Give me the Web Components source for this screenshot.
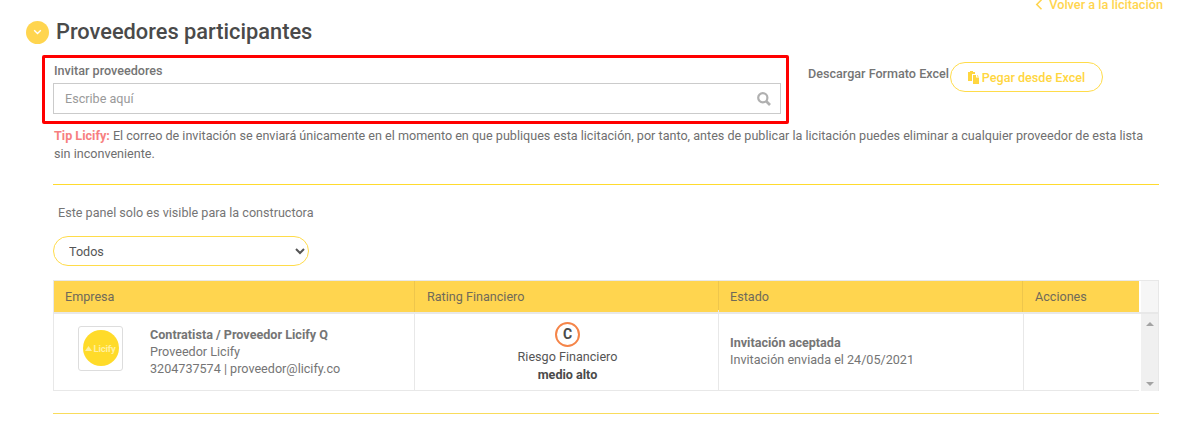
<!DOCTYPE html>
<html lang="es">
<head>
<meta charset="utf-8">
<title>Proveedores participantes</title>
<style>
    body {
        margin: 0;
        background: #fff;
        font-family: Roboto, "Liberation Sans", sans-serif;
        color: #6f6f6f;
        overflow: hidden;
    }
</style>
</head>
<body>
<provider-page></provider-page>

<script>
const YELLOW = '#ffd54f';

class SectionTitle extends HTMLElement {
    constructor() {
        super();
        this.attachShadow({ mode: 'open' });
        this.shadowRoot.innerHTML = `
            <style>
                :host { display: flex; align-items: center; gap: 7px; padding-left: 26px; height: 24px; }
                .dot { width: 23px; height: 23px; border-radius: 50%; background: ${YELLOW}; display: flex; align-items: center; justify-content: center; }
                h1 { margin: 0; font-size: 21.8px; line-height: 24px; font-weight: 500; color: #4a4a4a; }
            </style>
            <span class="dot">
                <svg width="9" height="6" viewBox="0 0 9 6"><path d="M1.2 1.2 4.5 4.4 7.8 1.2" fill="none" stroke="#fff" stroke-width="1.4"/></svg>
            </span>
            <h1><slot></slot></h1>
        `;
    }
}

class InviteBox extends HTMLElement {
    constructor() {
        super();
        this.attachShadow({ mode: 'open' });
        this.shadowRoot.innerHTML = `
            <style>
                :host { display: block; box-sizing: border-box; width: 747px; height: 69px; border: 3px solid #f00; border-radius: 2px; padding: 6px 5px 0 8px; }
                label { display: block; font-size: 12.6px; line-height: 14px; font-weight: 500; color: #757575; margin: 0 0 5px 1px; }
                .field { display: flex; align-items: center; box-sizing: border-box; height: 31px; border: 1px solid #cbcbcb; padding: 0 9px 0 11px; }
                input { flex: 1; border: 0; outline: 0; padding: 0; font: 400 12.6px Roboto, sans-serif; color: #6f6f6f; }
                input::placeholder { color: #9a9a9a; opacity: 1; }
            </style>
            <label>Invitar proveedores</label>
            <div class="field">
                <input placeholder="Escribe aquí">
                <svg width="14" height="14" viewBox="0 0 14 14"><circle cx="5.8" cy="5.8" r="4.6" fill="none" stroke="#b0b0b0" stroke-width="2.2"/><path d="M9 9 13 13" stroke="#b0b0b0" stroke-width="2.6"/></svg>
            </div>
        `;
    }
}

class PasteButton extends HTMLElement {
    constructor() {
        super();
        this.attachShadow({ mode: 'open' });
        this.shadowRoot.innerHTML = `
            <style>
                :host { display: inline-flex; align-items: center; justify-content: center; gap: 3px; box-sizing: border-box; width: 153px; height: 30px; margin-left: 1px; border: 1px solid #ffdc4a; border-radius: 15px; color: #ffd640; font-size: 12.6px; font-weight: 500; }
            </style>
            <svg width="11" height="13" viewBox="0 0 11 13"><path d="M0 1H2V0H5V1H7V3H4V10H0Z" fill="#ffd640"/><path d="M5 4H8V6.5H11V13H5Z" fill="#ffd640"/><path d="M9 4 11 5.6H9Z" fill="#ffd640"/></svg>
            <slot></slot>
        `;
    }
}

class ProviderTable extends HTMLElement {
    constructor() {
        super();
        this.attachShadow({ mode: 'open' });
        this.shadowRoot.innerHTML = `
            <style>
                :host { display: block; box-sizing: border-box; width: 1106px; height: 111px; border: 1px solid #e8e8e8; font-size: 12.6px; color: #757575; }
                .head { display: grid; grid-template-columns: 360px 304px 304px 117px 19px; height: 31px; border-bottom: 2px solid #e8e8e8; }
                .row { display: grid; grid-template-columns: 360px 304px 305px 116px 19px; height: 77px; }
                .head div { background: ${YELLOW}; color: #6f6a5a; padding-left: 12px; line-height: 31px; border-left: 1px solid #eec64c; }
                .head div:first-child { border-left: 0; padding-left: 11px; }
                .head div:nth-child(3) { padding-left: 11px; }
                .head .gap { background: #f6f6f6; border-left: 2px solid #fff; padding: 0; }
                .row > div { border-left: 1px solid #e8e8e8; }
                .row > div:first-child { border-left: 0; }
                .company { display: flex; align-items: center; padding-left: 24px; gap: 27px; line-height: 17px; }
                .company > div:last-child { margin-top: -3px; }
                .logo { box-sizing: border-box; width: 45px; height: 45px; border: 1px solid #ddd; border-radius: 3px; display: flex; align-items: center; justify-content: center; margin-top: -9px; }
                .logo span { width: 36px; height: 36px; border-radius: 50%; background: #ffdb2a; color: #fff0a0; font-size: 9.5px; font-weight: 700; letter-spacing: -.2px; display: flex; align-items: center; justify-content: center; gap: 1px; }
                b { font-weight: 700; }
                .rating { display: flex; flex-direction: column; align-items: center; padding: 8px 0 0 2px; color: #555; line-height: 18px; }
                .rating i { box-sizing: border-box; width: 25px; height: 25px; border: 2px solid #f58549; border-radius: 50%; font: 700 14px/21px Roboto, sans-serif; text-align: center; color: #4a4a4a; margin-bottom: 1px; }
                .rating b { color: #4a4a4a; }
                .state { display: flex; flex-direction: column; justify-content: center; padding-left: 11px; line-height: 17px; margin-top: -4px; }
                .bar { background: #f0f0f0; display: flex; flex-direction: column; justify-content: space-between; align-items: center; padding: 8px 0 5px; border-left: 2px solid #fff !important; }
                .bar span { width: 0; height: 0; border-left: 4px solid transparent; border-right: 4px solid transparent; }
                .up { border-bottom: 4px solid #a3a3a3; }
                .down { border-top: 4px solid #a3a3a3; }
            </style>
            <div class="head">
                <div>Empresa</div><div>Rating Financiero</div><div>Estado</div><div>Acciones</div><div class="gap"></div>
            </div>
            <div class="row">
                <div class="company">
                    <div class="logo"><span><svg width="7" height="5" viewBox="0 0 7 5"><path d="M0 5 3.5 0 7 5Z" fill="#fff0a0"/></svg>Licify</span></div>
                    <div><b>Contratista / Proveedor Licify Q</b><br>Proveedor Licify<br>3204737574 | proveedor@licify.co</div>
                </div>
                <div class="rating"><i>C</i><span>Riesgo Financiero</span><b>medio alto</b></div>
                <div class="state"><b>Invitación aceptada</b><span>Invitación enviada el 24/05/2021</span></div>
                <div></div>
                <div class="bar"><span class="up"></span><span class="down"></span></div>
            </div>
        `;
    }
}

class ProviderPage extends HTMLElement {
    constructor() {
        super();
        this.attachShadow({ mode: 'open' });
        this.shadowRoot.innerHTML = `
            <style>
                :host { display: block; height: 429px; overflow: hidden; font-size: 12.6px; }
                .back { display: flex; justify-content: flex-end; align-items: center; gap: 6px; height: 16px; margin-top: -4px; padding-right: 27px; color: ${YELLOW}; font-weight: 500; font-size: 12.7px; }
                section-title { margin-top: 8px; }
                .tools { display: flex; margin: 11px 0 0 42px; }
                .excel { display: flex; align-items: flex-start; margin-left: 19px; padding-top: 7px; }
                .excel span { font-weight: 500; font-size: 12.6px; line-height: 26px; color: #757575; margin-top: -1px; }
                .main { padding: 0 31px 0 53px; }
                .tip { margin: 3px 0 0 1px; line-height: 18px; width: 1100px; color: #6f6f6f; }
                .tip b { color: #f77f7f; font-weight: 700; }
                hr { border: 0; height: 1px; margin: 0; }
                .first { margin-top: 21px; background: #ffdb2e; }
                .note { margin: 20px 0 0 5px; line-height: 16px; color: #757575; }
                select { display: block; box-sizing: border-box; width: 256px; height: 30px; margin-top: 15px; padding-left: 11px; border: 1px solid #ffdc4a; border-radius: 15px; background: #fff; outline: 0; font: 400 12.6px Roboto, sans-serif; color: #555; }
                provider-table { margin-top: 14px; }
                .last { margin-top: 22px; background: #f9dc5c; }
            </style>
            <div class="back">
                <svg width="8" height="11" viewBox="0 0 8 11"><path d="M6.5 .8 1.8 5.5 6.5 10.2" fill="none" stroke="${YELLOW}" stroke-width="1.6"/></svg>
                <span>Volver a la licitación</span>
            </div>
            <section-title>Proveedores participantes</section-title>
            <div class="tools">
                <invite-box></invite-box>
                <div class="excel">
                    <span>Descargar Formato Excel</span>
                    <paste-button>Pegar desde Excel</paste-button>
                </div>
            </div>
            <div class="main">
                <p class="tip"><b>Tip Licify:</b> El correo de invitación se enviará únicamente en el momento en que publiques esta licitación, por tanto, antes de publicar la licitación puedes eliminar a cualquier proveedor de esta lista sin inconveniente.</p>
                <hr class="first">
                <p class="note">Este panel solo es visible para la constructora</p>
                <select><option>Todos</option></select>
                <provider-table></provider-table>
                <hr class="last">
            </div>
        `;
    }
}

customElements.define('section-title', SectionTitle);
customElements.define('invite-box', InviteBox);
customElements.define('paste-button', PasteButton);
customElements.define('provider-table', ProviderTable);
customElements.define('provider-page', ProviderPage);
</script>
</body>
</html>
